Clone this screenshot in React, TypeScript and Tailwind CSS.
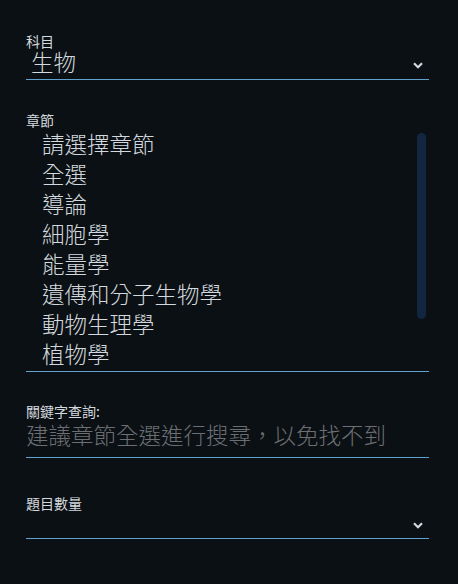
import React from "react";

const chapters = [
  "請選擇章節",
  "全選",
  "導論",
  "細胞學",
  "能量學",
  "遺傳和分子生物學",
  "動物生理學",
  "植物學",
];

function Chevron() {
  return (
    <svg width="10" height="7" viewBox="0 0 10 7" className="shrink-0">
      <path d="M1 1.3 L5 5.3 L9 1.3" fill="none" stroke="#d3d9de" strokeWidth="2.2" />
    </svg>
  );
}

export default function App() {
  const font = { fontFamily: '"Noto Sans CJK TC", "Noto Sans", sans-serif' };

  return (
    <main className="w-[458px] h-[584px] bg-[#0b1014] text-[#d3d9de] pl-[26px] pr-[29px] pt-[33px]" style={font}>
      {/* 科目 */}
      <section>
        <label className="block text-[14px] leading-[16px]">科目</label>
        <div className="-mt-[1px] flex items-center justify-between pb-[5px] border-b border-[#5fa3cd]">
          <span className="pl-[5px] text-[22.5px] font-light leading-[26px]">生物</span>
          <span className="mr-[6px] mt-[9px]">
            <Chevron />
          </span>
        </div>
      </section>

      {/* 章節 */}
      <section className="mt-[32px]">
        <label className="block text-[14px] leading-[16px]">章節</label>
        <div className="relative pb-[3px] border-b border-[#5fa3cd]">
          <ul className="h-[240px] overflow-hidden">
            {chapters.map((c) => (
              <li key={c} className="pl-[16px] text-[22.5px] font-light leading-[30px]">
                {c}
              </li>
            ))}
          </ul>
          <div className="absolute right-[3px] top-[5px] w-[9px] h-[186px] rounded-full bg-[#12263f]" />
        </div>
      </section>

      {/* 關鍵字查詢 */}
      <section className="mt-[31px]">
        <label className="block text-[14px] leading-[16px]">關鍵字查詢:</label>
        <div className="mt-[2px] pb-[10px] border-b border-[#5fa3cd]">
          <input
            className="block w-full bg-transparent outline-none text-[22.5px] font-light leading-[26px] h-[26px] placeholder:text-[#6b6f73]"
            placeholder="建議章節全選進行搜尋，以免找不到"
            style={font}
          />
        </div>
      </section>

      {/* 題目數量 */}
      <section className="mt-[37px]">
        <label className="block text-[14px] leading-[16px]">題目數量</label>
        <div className="flex h-[28px] items-center justify-end border-b border-[#5fa3cd]">
          <span className="mr-[6px] mt-[1px]">
            <Chevron />
          </span>
        </div>
      </section>
    </main>
  );
}
